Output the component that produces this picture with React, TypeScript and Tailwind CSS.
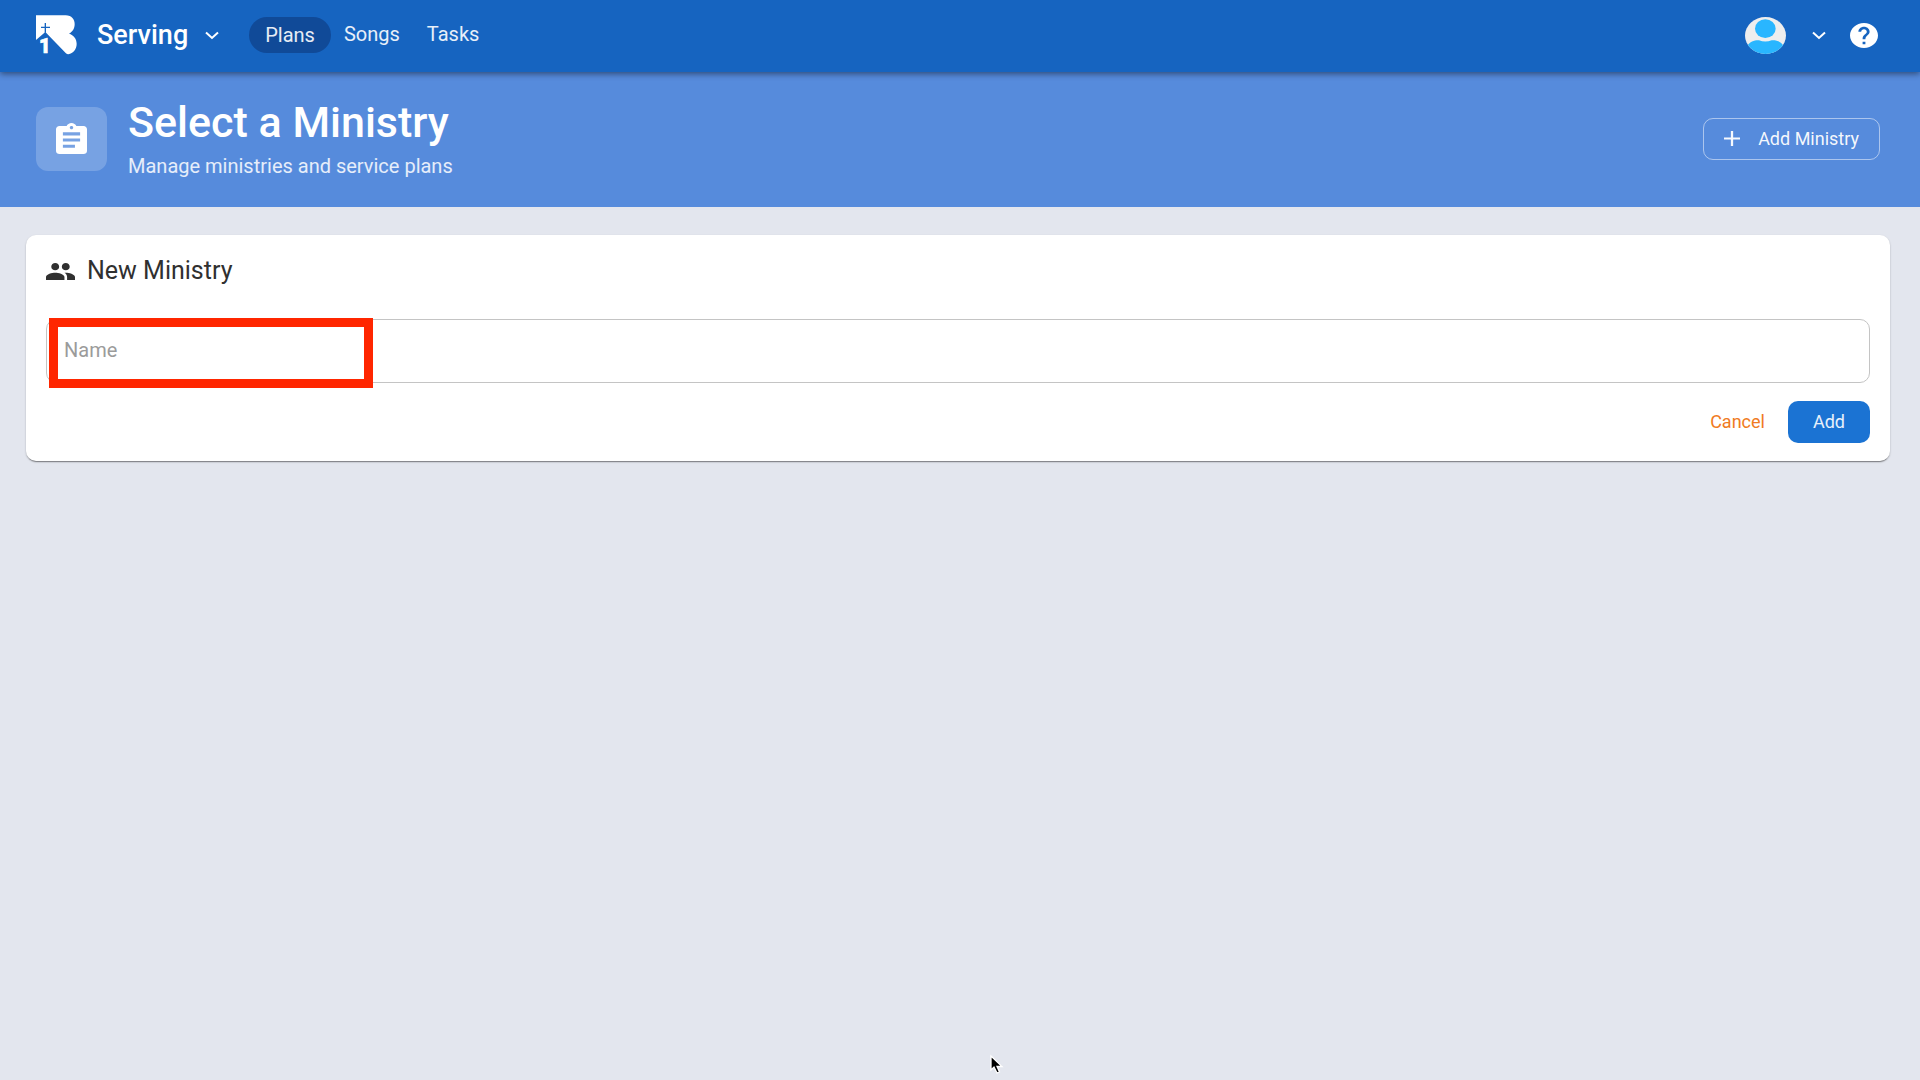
import { useState } from "react";
import type { ReactNode } from "react";

const NAV = ["Plans", "Songs", "Tasks"];

export default function App() {
  return (
    <div className="min-h-screen bg-[#e3e6ee] font-['Roboto',sans-serif]">
      <TopBar />
      <Banner />
      <main className="pt-7 pr-[30px] pl-[26px]">
        <NewMinistryCard />
      </main>
      <Pointer />
    </div>
  );
}

function TopBar() {
  return (
    <header className="relative flex h-[72px] items-center justify-between bg-[#1664c0] pr-[42px] pb-[2px] pl-9 text-white shadow-[0_2px_6px_rgba(0,0,0,0.45)]">
      <div className="flex items-center">
        <Logo />
        <button type="button" className="ml-5 flex items-center gap-[17px] text-[27px] leading-8 font-medium">
          Serving
          <Chevron />
        </button>
        <nav className="ml-[30px] flex items-center text-xl leading-6">
          {NAV.map((item, i) => (
            <a
              key={item}
              href="#"
              aria-current={i === 0 ? "page" : undefined}
              className={
                i === 0
                  ? "mr-[13px] rounded-full bg-[#104a98] px-4 py-[6px] text-white/90"
                  : "mr-[27px] pb-[2px] text-white/90"
              }
            >
              {item}
            </a>
          ))}
        </nav>
      </div>
      <div className="flex items-center">
        <button type="button" aria-label="Account" className="flex items-center gap-[26px]">
          <Avatar />
          <Chevron />
        </button>
        <button type="button" aria-label="Help" className="ml-6">
          <Glyph
            className="h-[25px] w-7"
            viewBox="2 2 20 20"
            d="M12 2C6.48 2 2 6.48 2 12s4.48 10 10 10 10-4.48 10-10S17.52 2 12 2zm1 17h-2v-2h2v2zm2.07-7.75l-.9.92C13.45 12.9 13 13.5 13 15h-2v-.5c0-1.1.45-2.1 1.17-2.83l1.24-1.26c.37-.36.59-.86.59-1.41 0-1.1-.9-2-2-2s-2 .9-2 2H8c0-2.21 1.79-4 4-4s4 1.79 4 4c0 .88-.36 1.68-.93 2.25z"
          />
        </button>
      </div>
    </header>
  );
}

function Banner() {
  return (
    <section className="flex h-[135px] items-center justify-between bg-[#568bdc] pr-10 pb-[2px] pl-9 text-white">
      <div className="flex items-center gap-[21px]">
        <div className="flex h-16 w-[71px] items-center justify-center rounded-xl bg-white/20">
          <Glyph
            className="h-[31px] w-[31px]"
            viewBox="3 1 18 20"
            d="M19 3h-4.18C14.4 1.84 13.3 1 12 1c-1.3 0-2.4.84-2.82 2H5c-1.1 0-2 .9-2 2v14c0 1.1.9 2 2 2h14c1.1 0 2-.9 2-2V5c0-1.1-.9-2-2-2zm-7 0c.55 0 1 .45 1 1s-.45 1-1 1-1-.45-1-1 .45-1 1-1zm2 14H7v-2h7v2zm3-4H7v-2h10v2zm0-4H7V7h10v2z"
          />
        </div>
        <div className="pb-[2px]">
          <h1 className="text-[43px] leading-[48px] font-medium">Select a Ministry</h1>
          <p className="pt-2 text-xl leading-6 text-white/85">Manage ministries and service plans</p>
        </div>
      </div>
      <button
        type="button"
        className="flex h-[42px] items-center gap-[18px] rounded-[10px] border border-white/50 px-5 text-lg leading-6 text-white/95"
      >
        <Glyph className="h-[15px] w-4" viewBox="5 5 14 14" d="M19 13h-6v6h-2v-6H5v-2h6V5h2v6h6v2z" />
        Add Ministry
      </button>
    </section>
  );
}

function NewMinistryCard() {
  const [name, setName] = useState("");

  return (
    <form
      onSubmit={(e) => e.preventDefault()}
      className="rounded-[10px] bg-white px-5 pt-5 pb-[18px] shadow-[0_2px_1px_-1px_rgba(0,0,0,0.3),0_1px_2px_rgba(0,0,0,0.25)]"
    >
      <div className="flex items-center gap-3 text-[#303030]">
        <Glyph
          className="h-[17px] w-[29px]"
          viewBox="1 5 22 14"
          d="M16 11c1.66 0 2.99-1.34 2.99-3S17.66 5 16 5c-1.66 0-3 1.34-3 3s1.34 3 3 3zm-8 0c1.66 0 2.99-1.34 2.99-3S9.66 5 8 5C6.34 5 5 6.34 5 8s1.34 3 3 3zm0 2c-2.33 0-7 1.17-7 3.5V19h14v-2.5c0-2.33-4.67-3.5-7-3.5zm8 0c-.29 0-.62.02-.97.05 1.16.84 1.97 1.97 1.97 3.45V19h6v-2.5c0-2.33-4.67-3.5-7-3.5z"
        />
        <h2 className="text-[25px] leading-8">New Ministry</h2>
      </div>
      <div className="relative mt-8">
        <input
          id="ministry-name"
          value={name}
          onChange={(e) => setName(e.target.value)}
          className="block h-16 w-full rounded-[10px] border border-[#c4c4c4] px-[18px] text-xl outline-none"
        />
        {!name && (
          <label htmlFor="ministry-name" className="absolute top-[19px] left-[18px] text-xl leading-6 text-[#9b9b9b]">
            Name
          </label>
        )}
        <div className="pointer-events-none absolute -top-px left-[3px] h-[70px] w-[324px] border-[9px] border-[#ff2600]" />
      </div>
      <div className="mt-[18px] flex items-center justify-end gap-[23px] text-lg leading-6">
        <button type="button" className="text-[#f07b22]">
          Cancel
        </button>
        <button type="submit" className="h-[42px] rounded-[10px] bg-[#1b73d3] px-[25px] text-white/90">
          Add
        </button>
      </div>
    </form>
  );
}

function Glyph({ d, viewBox, className }: { d: string; viewBox: string; className: string }): ReactNode {
  return (
    <svg className={className} viewBox={viewBox} preserveAspectRatio="none" fill="currentColor" aria-hidden="true">
      <path d={d} />
    </svg>
  );
}

function Chevron() {
  return (
    <svg className="h-[9px] w-[14px]" viewBox="0 0 14 9" fill="none" stroke="currentColor" strokeWidth="2" aria-hidden="true">
      <path d="M1 1.5 7 7 13 1.5" />
    </svg>
  );
}

function Avatar() {
  return (
    <svg className="h-[37px] w-[41px]" viewBox="0 0 123 111" aria-hidden="true">
      <clipPath id="avatar-clip">
        <ellipse cx="61.5" cy="55.5" rx="61.5" ry="55.5" />
      </clipPath>
      <g clipPath="url(#avatar-clip)">
        <rect width="123" height="111" fill="#eeeeee" />
        <path d="M8 86C14 74 30 69 42 70Q61 77 80 70C94 69 109 74 115 86V111H8Z" fill="#29b6ff" />
        <ellipse cx="61" cy="35" rx="31" ry="28" fill="#29b6ff" />
      </g>
    </svg>
  );
}

function Logo() {
  return (
    <svg className="h-10 w-[41px] overflow-visible" viewBox="48 47 123 120" aria-hidden="true">
      <path
        d="M48 48H137C155 48 164 60 164 75C164 88 157 98 147 103C161 107 170 118 170 133C170 150 160 161 145 165Q141 165 137 161L76 98L48 122Z"
        fill="#fff"
      />
      <path d="M76 71V100M63 84H90" stroke="#1664c0" strokeWidth="4" />
      <text x="57" y="162" fontSize="60" fontWeight="900" fill="#fff" stroke="#fff" strokeWidth="2">
        1
      </text>
    </svg>
  );
}

function Pointer() {
  return (
    <svg className="pointer-events-none absolute top-[1054px] left-[989px] h-[21px] w-[15px]" viewBox="0 0 15 21" aria-hidden="true">
      <path d="M2 2V16L5 13L8 19L10.5 18L8 12.5H13Z" fill="#000" stroke="#fff" strokeWidth="1.3" />
    </svg>
  );
}
